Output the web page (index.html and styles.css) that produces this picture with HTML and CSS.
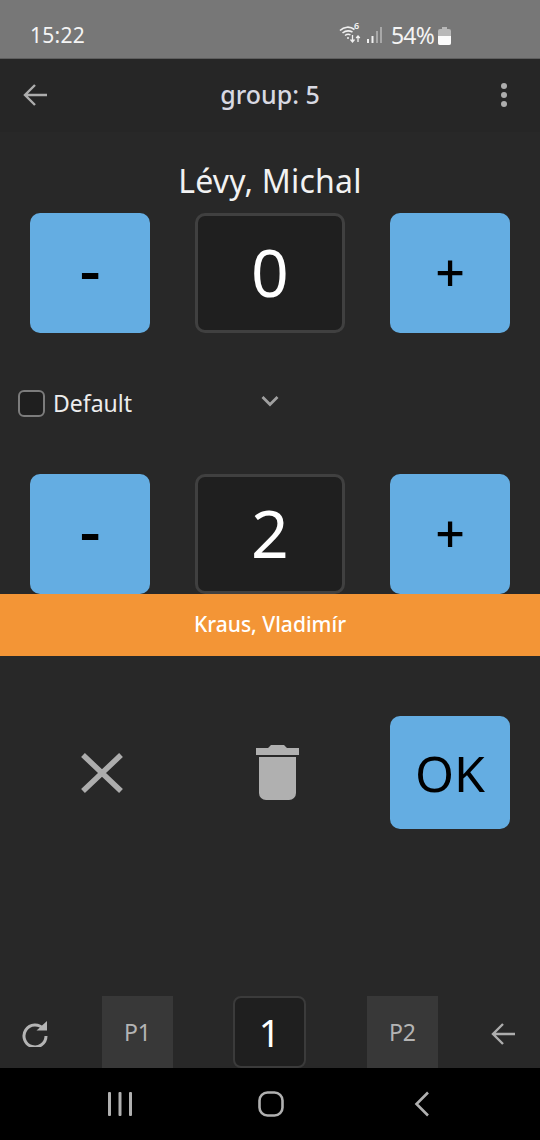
FILE: index.html
```html
<!DOCTYPE html>
<html lang="cs">
<head>
<meta charset="utf-8">
<title>group: 5</title>
<link rel="stylesheet" href="styles.css">
</head>
<body>
<div class="screen">
  <div class="status">
    <span class="time">15:22</span>
    <div class="status-right">
      <svg class="wifi" width="22" height="20" viewBox="0 0 22 20" fill="none" stroke="#f0f0f0">
        <path d="M1 5.500C5 1.500 11 1 15.500 4.500" stroke-width="1.600"/>
        <path d="M3.500 8C6.500 5.500 10 5.200 13.500 7" stroke-width="1.600"/>
        <path d="M6 10.500C8 9 10 9 11.500 10" stroke-width="1.500"/>
        <circle cx="9" cy="13" r="1" fill="#f0f0f0" stroke="none"/>
        <path d="M13.500 10v7M11.500 14.500l2 2.500 2-2.500" stroke-width="1.300"/>
        <path d="M19 11v6M17.200 13l1.800-2 1.800 2" stroke-width="1.300"/>
      </svg>
      <span class="sim-digit">6</span>
      <svg class="signal" width="16" height="18" viewBox="0 0 16 18">
        <rect x="1" y="13" width="2" height="4" fill="#f0f0f0"/>
        <rect x="5.500" y="10" width="2" height="7" fill="#f0f0f0"/>
        <rect x="10" y="5" width="2" height="12" fill="#a8a8a8"/>
        <rect x="14" y="1" width="2" height="16" fill="#a8a8a8"/>
      </svg>
      <span class="battery-text">54%</span>
      <svg class="battery" width="13" height="18" viewBox="0 0 13 18">
        <path d="M4 0h5v2h2a2 2 0 0 1 2 2v12a2 2 0 0 1-2 2H2a2 2 0 0 1-2-2V4a2 2 0 0 1 2-2h2z" fill="#b8b8b8"/>
        <path d="M0 9h13v7a2 2 0 0 1-2 2H2a2 2 0 0 1-2-2z" fill="#fbfbfb"/>
      </svg>
    </div>
  </div>

  <div class="appbar">
    <svg class="bar-icon" width="26" height="26" viewBox="0 0 26 26" fill="none" stroke="#adadad" stroke-width="2.400">
      <path d="M25 13H3M13 3L3 13l10 10"/>
    </svg>
    <span class="title">group: 5</span>
    <svg class="menu-icon" width="8" height="26" viewBox="0 0 8 26" fill="#adadad">
      <circle cx="4" cy="4" r="3"/><circle cx="4" cy="13" r="3"/><circle cx="4" cy="22" r="3"/>
    </svg>
  </div>

  <div class="content">
    <div class="name">Lévy, Michal</div>
    <div class="counter">
      <div class="btn"><span class="minus">-</span></div>
      <div class="value">0</div>
      <div class="btn plus">+</div>
    </div>

    <div class="default-row">
      <label class="check"><span class="box"></span><span>Default</span></label>
      <svg class="chevron" width="18" height="12" viewBox="0 0 18 12" fill="none" stroke="#a0a0a0" stroke-width="2.800">
        <path d="M1.500 2L9 9.500 16.500 2"/>
      </svg>
    </div>

    <div class="counter">
      <div class="btn"><span class="minus">-</span></div>
      <div class="value">2</div>
      <div class="btn plus">+</div>
    </div>

    <div class="toast">Kraus, Vladimír</div>

    <div class="actions">
      <svg class="x-icon" width="44" height="44" viewBox="0 0 44 44" fill="none" stroke="#adadad" stroke-width="5.500">
        <path d="M3 4l38 36M41 4L3 40"/>
      </svg>
      <svg class="trash-icon" width="43" height="55" viewBox="0 0 43 55" fill="#b0b0b0">
        <path d="M0 3h12l3-3h13l3 3h12v7H0z"/>
        <path d="M3 12h37v36a7 7 0 0 1-7 7H10a7 7 0 0 1-7-7z"/>
      </svg>
      <div class="btn ok">OK</div>
    </div>

    <div class="pager">
      <svg class="refresh" width="26" height="26" viewBox="0 0 26 26" fill="none" stroke="#b4b4b4" stroke-width="3">
        <path d="M21.500 8A11 11 0 1 0 24 15"/>
        <path d="M14.500 9.500H25V0z" fill="#b4b4b4" stroke="none"/>
      </svg>
      <div class="page-btn">P1</div>
      <div class="page-num">1</div>
      <div class="page-btn">P2</div>
      <svg class="pager-back" width="26" height="26" viewBox="0 0 26 26" fill="none" stroke="#adadad" stroke-width="2.400">
        <path d="M25 13H3M13 3L3 13l10 10"/>
      </svg>
    </div>
  </div>

  <div class="navbar">
    <svg width="26" height="26" viewBox="0 0 26 26" fill="#b0b0b0">
      <rect x="1" y="1" width="3" height="24" rx="1"/><rect x="11.500" y="1" width="3" height="24" rx="1"/><rect x="22" y="1" width="3" height="24" rx="1"/>
    </svg>
    <svg width="26" height="26" viewBox="0 0 26 26" fill="none" stroke="#b0b0b0" stroke-width="2.600">
      <rect x="1.500" y="1.500" width="23" height="23" rx="8"/>
    </svg>
    <svg width="16" height="26" viewBox="0 0 16 26" fill="none" stroke="#b0b0b0" stroke-width="2.600">
      <path d="M14 1.500L2.500 13 14 24.500"/>
    </svg>
  </div>
</div>
</body>
</html>
```
FILE: styles.css
```css
* { box-sizing: border-box; }
html, body { margin: 0; padding: 0; }
body { font-family: "Noto Sans", "DejaVu Sans", sans-serif; background: #282828; }

.screen { width: 540px; height: 1140px; display: flex; flex-direction: column; overflow: hidden; }

.status {
  height: 59px; flex: none; background: #777; border-bottom: 1px solid #5e5e5e;
  display: flex; align-items: center; justify-content: space-between;
  padding: 11px 89px 0 30px; color: #f4f4f4;
}
.time { font-size: 21px; letter-spacing: .3px; }
.status-right { display: flex; align-items: center; position: relative; }
.wifi { margin-right: 5px; }
.sim-digit { position: absolute; left: 15px; top: -1px; font-size: 9px; font-weight: 600; line-height: 12px; }
.signal { margin-right: 9px; }
.battery-text { font-size: 23px; line-height: 28px; margin-right: 4px; letter-spacing: -.8px; }
.battery { margin-top: 2px; }

.appbar {
  height: 73px; flex: none; background: #262626;
  display: flex; align-items: center; justify-content: space-between;
  padding: 0 32px 2px 22px; position: relative;
}
.title {
  position: absolute; left: 0; right: 0; top: 16px; text-align: center;
  font-size: 25px; font-weight: 500; color: #d8d9e2; line-height: 38px;
}

.content { flex: 1; display: flex; flex-direction: column; min-height: 0; }

.name {
  text-align: center; color: #f2f2f2; font-size: 32px;
  height: 48px; line-height: 48px; margin-top: 25px; margin-bottom: 8px; letter-spacing: .2px;
}
.counter { display: flex; justify-content: space-between; padding: 0 30px; flex: none; }
.btn {
  width: 120px; height: 120px; background: #64ade2; border-radius: 10px; color: #000;
  display: flex; align-items: center; justify-content: center; font-size: 52px; line-height: 1;
}
.plus { font-weight: 500; padding-bottom: 2px; }
.minus { font-size: 66px; font-weight: 500; padding-bottom: 10px; }
.value {
  width: 150px; height: 120px; background: #1f1f1f; border: 3px solid #404040; border-radius: 10px;
  color: #fff; font-size: 66px; padding-bottom: 4px;
  display: flex; align-items: center; justify-content: center;
}

.default-row { height: 141px; position: relative; display: flex; align-items: center; justify-content: center; }
.check {
  position: absolute; left: 18px; top: 56px; display: flex; align-items: center; gap: 8px;
  color: #ededed; font-size: 23px; line-height: 28px;
}
.box { width: 27px; height: 27px; background: #1f1f1f; border: 2px solid #7c7c7c; border-radius: 6px; }
.chevron { margin-top: -6px; }

.toast {
  height: 62px; flex: none; background: #f39536; color: #fff; padding-bottom: 2px;
  font-size: 21px; font-weight: 500; display: flex; align-items: center; justify-content: center;
}

.actions { display: flex; align-items: center; padding: 0 30px 0 0; margin-top: 60px; height: 113px; position: relative; flex: none; }
.x-icon { margin-left: 80px; }
.trash-icon { margin-left: 132px; }
.ok { height: 113px; margin-left: auto; font-size: 50px; }

.pager {
  margin-top: auto; height: 72px; flex: none; display: flex; align-items: flex-end;
  padding: 0 24px 0 22px;
}
.refresh { margin-bottom: 21px; }
.page-btn {
  width: 71px; height: 72px; background: #383838; color: #b4b4b4; font-size: 23px;
  display: flex; align-items: center; justify-content: center; margin-left: 54px;
}
.page-num {
  width: 73px; height: 72px; background: #1f1f1f; border: 2px solid #3b3b3b; border-radius: 8px;
  color: #fff; font-size: 38px; margin-left: 60px;
  display: flex; align-items: center; justify-content: center;
}
.page-num + .page-btn { margin-left: 61px; }
.pager-back { margin-left: auto; margin-bottom: 21px; }

.navbar {
  height: 72px; flex: none; background: #000;
  display: flex; align-items: center; padding: 0 110px 0 107px;
}
.navbar svg:nth-child(2) { margin-left: 125px; }
.navbar svg:nth-child(3) { margin-left: auto; }
```
